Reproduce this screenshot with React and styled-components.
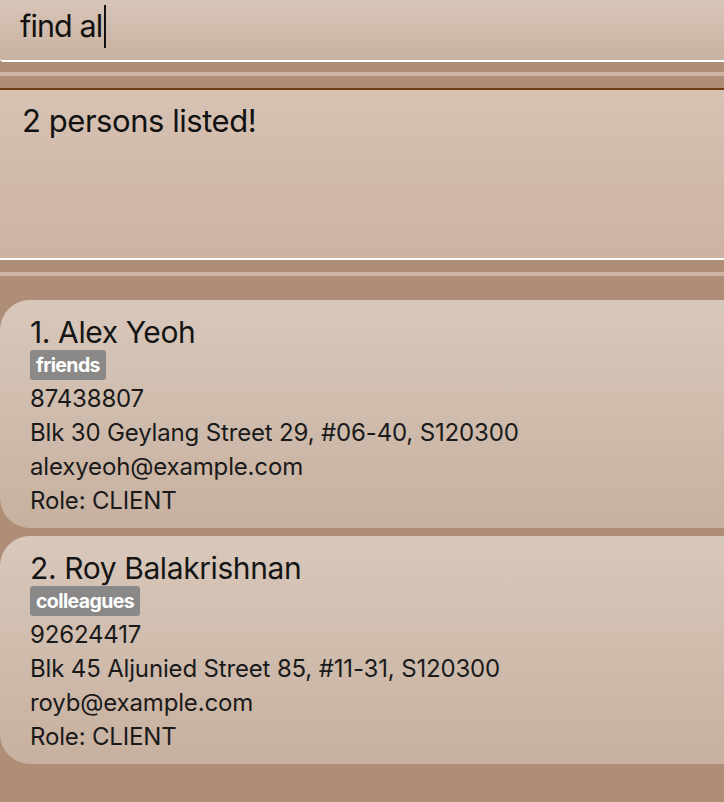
import React from "react";
import styled, { createGlobalStyle } from "styled-components";

const Global = createGlobalStyle`
  html, body { margin: 0; padding: 0; }
  body {
    background: #ae8e76;
    font-family: Inter, "Noto Sans", "Liberation Sans", sans-serif;
    overflow: hidden;
  }
`;

const Page = styled.div`
  width: 724px;
  height: 802px;
  display: flex;
  flex-direction: column;
  background: #ae8e76;
  overflow: hidden;
`;

const CommandBox = styled.div`
  height: 62px;
  box-sizing: border-box;
  padding: 4px 20px 0;
  display: flex;
  align-items: flex-start;
  background: linear-gradient(180deg, #d7c5b8 0%, #c8b2a1 100%);
  border-bottom: 2px solid #ffffff;
  border-bottom-left-radius: 4px;
  flex: none;
`;

const CommandText = styled.span`
  font-size: 30.5px;
  line-height: 44px;
  letter-spacing: -0.9px;
  color: #111;
  display: flex;
  align-items: center;
`;

const Caret = styled.span`
  display: inline-block;
  width: 2px;
  height: 43px;
  background: #111;
  margin-left: 2px;
`;

const Splitter = styled.div`
  flex: none;
  display: flex;
  flex-direction: column;
  padding-top: ${(p) => p.$above}px;
  padding-bottom: ${(p) => p.$below}px;
  &::before {
    content: "";
    display: block;
    height: 4px;
    background: #cdb5a5;
  }
`;

const ResultBox = styled.div`
  flex: none;
  box-sizing: border-box;
  height: 172px;
  border-top: 2px solid #6f3a10;
  border-bottom: 2px solid #ffffff;
  background: linear-gradient(180deg, #d6c2b3 0%, #cdb2a2 100%);
  padding: 12px 22px 0;
`;

const ResultText = styled.div`
  font-size: 31px;
  line-height: 38px;
  letter-spacing: -0.45px;
  color: #111;
`;

const List = styled.div`
  display: flex;
  flex-direction: column;
  gap: 8px;
`;

const Card = styled.div`
  height: 228px;
  box-sizing: border-box;
  margin-right: -40px;
  border-radius: 30px;
  background: linear-gradient(180deg, #d8c8bb 0%, #c7b09f 100%);
  padding: 14px 30px 0;
  display: flex;
  flex-direction: column;
  align-items: flex-start;
`;

const Name = styled.div`
  font-size: 30px;
  line-height: 36px;
  letter-spacing: -0.4px;
  color: #151515;
`;

const Tag = styled.span`
  background: #8a8988;
  color: #fff;
  font-weight: 700;
  font-size: 19.5px;
  line-height: 30px;
  letter-spacing: -0.6px;
  padding: 0 6px;
  border-radius: 3px;
  margin: 0 0 2px;
`;

const Detail = styled.div`
  font-size: 24px;
  line-height: 34px;
  letter-spacing: -0.16px;
  color: #1a1a1a;
`;

const persons = [
  {
    name: "Alex Yeoh",
    tag: "friends",
    phone: "87438807",
    address: "Blk 30 Geylang Street 29, #06-40, S120300",
    email: "alexyeoh@example.com",
    role: "CLIENT",
  },
  {
    name: "Roy Balakrishnan",
    tag: "colleagues",
    phone: "92624417",
    address: "Blk 45 Aljunied Street 85, #11-31, S120300",
    email: "royb@example.com",
    role: "CLIENT",
  },
];

export default function App() {
  return (
    <Page>
      <Global />
      <CommandBox>
        <CommandText>
          find al
          <Caret />
        </CommandText>
      </CommandBox>
      <Splitter $above={10} $below={12} />
      <ResultBox>
        <ResultText>2 persons listed!</ResultText>
      </ResultBox>
      <Splitter $above={12} $below={24} />
      <List>
        {persons.map((p, i) => (
          <Card key={p.name}>
            <Name>
              {i + 1}. {p.name}
            </Name>
            <Tag>{p.tag}</Tag>
            <Detail>{p.phone}</Detail>
            <Detail>{p.address}</Detail>
            <Detail>{p.email}</Detail>
            <Detail>Role: {p.role}</Detail>
          </Card>
        ))}
      </List>
    </Page>
  );
}
